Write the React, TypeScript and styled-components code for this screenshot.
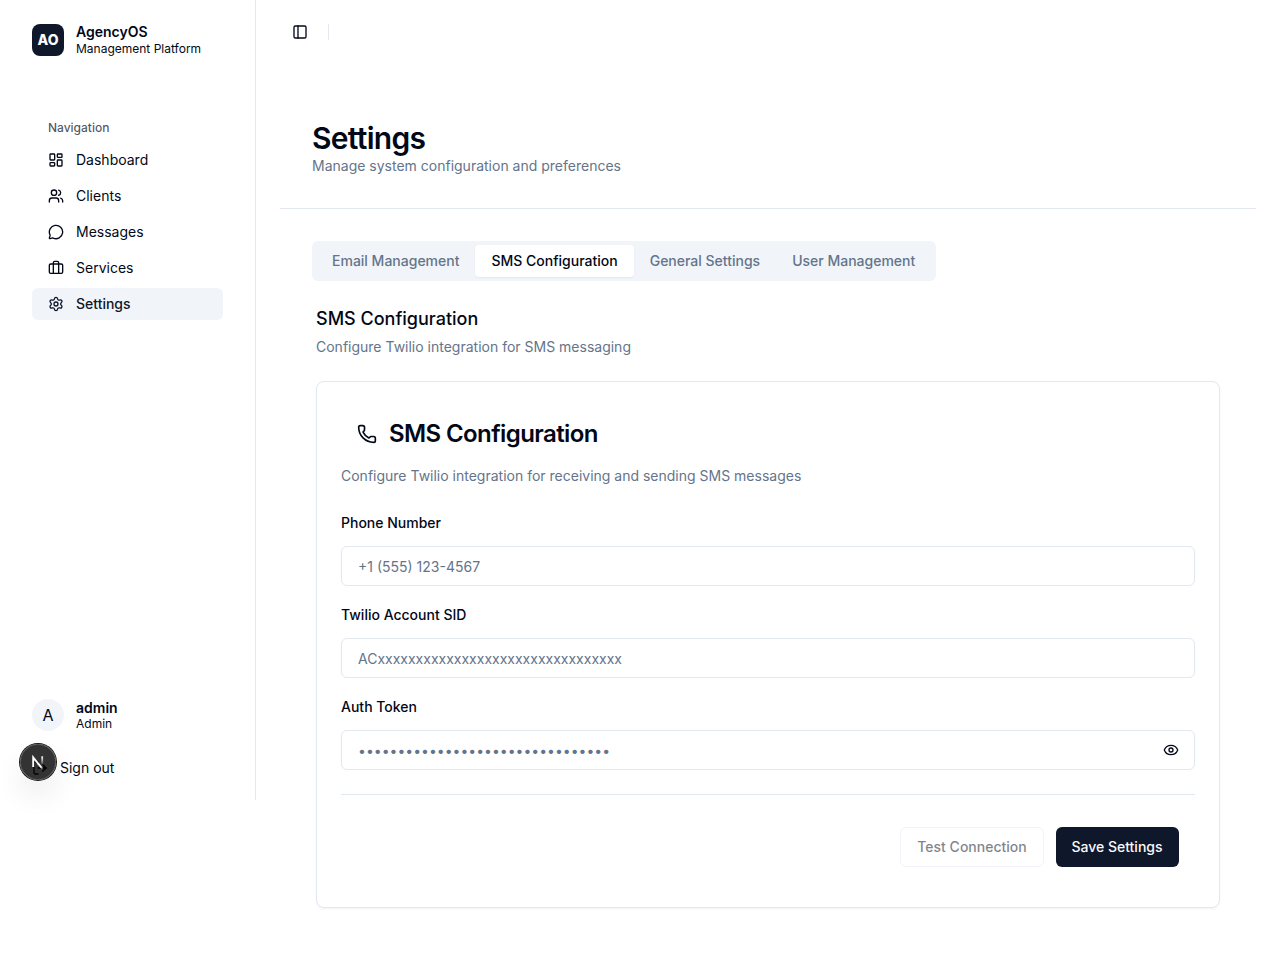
import React from "react";
import styled, { createGlobalStyle } from "styled-components";
import {
  Eye,
  LayoutDashboard,
  LogOut,
  MessageCircle,
  PanelLeft,
  Phone,
  Settings,
  Users,
} from "lucide-react";

const ink = "#020817";
const muted = "#64748b";
const line = "#e2e8f0";
const soft = "#f1f5f9";
const navy = "#0f172a";

const GlobalStyle = createGlobalStyle`
  *, *::before, *::after { box-sizing: border-box; }
  body {
    margin: 0;
    background: #fff;
    color: ${ink};
    font-family: Inter, "Liberation Sans", sans-serif;
    font-size: 14px;
    line-height: 20px;
  }
  h1, h2, h3, p, ul { margin: 0; padding: 0; }
  button, input { font: inherit; color: inherit; }
`;

const Page = styled.div`
  display: flex;
  align-items: flex-start;
  min-height: 964px;
`;

const Sidebar = styled.aside`
  display: flex;
  flex-direction: column;
  flex: none;
  width: 256px;
  height: 800px;
  padding: 24px 32px 16px;
  border-right: 1px solid ${line};
`;

const Identity = styled.div`
  display: flex;
  align-items: center;
  gap: 12px;
  height: 32px;
`;

const LogoTile = styled.div`
  display: grid;
  place-items: center;
  width: 32px;
  height: 32px;
  border-radius: 8px;
  background: ${navy};
  color: #f8fafc;
  font-weight: 800;
`;

const Avatar = styled.div`
  display: grid;
  place-items: center;
  width: 32px;
  height: 32px;
  border-radius: 50%;
  background: ${soft};
  font-size: 16px;
  font-weight: 400;
`;

const IdentityText = styled.div<{ $lowered?: boolean }>`
  display: flex;
  flex-direction: column;
  padding-top: ${(p) => (p.$lowered ? "2px" : "0")};
`;

const IdentityName = styled.span<{ $tight?: boolean }>`
  font-weight: 600;
  line-height: ${(p) => (p.$tight ? "16px" : "17.5px")};
`;

const IdentityNote = styled.span`
  font-size: 12px;
  line-height: 16px;
`;

const NavLabel = styled.div`
  margin-top: 56px;
  height: 32px;
  padding: 0 16px;
  font-size: 12px;
  font-weight: 500;
  line-height: 32px;
  color: rgba(2, 8, 23, 0.7);
`;

const NavList = styled.ul`
  display: flex;
  flex-direction: column;
  gap: 4px;
  list-style: none;
`;

const NavItem = styled.li<{ $active?: boolean }>`
  display: flex;
  align-items: center;
  gap: 12px;
  height: 32px;
  padding: 0 16px;
  border-radius: 6px;
  background: ${(p) => (p.$active ? soft : "transparent")};
  color: ${(p) => (p.$active ? navy : ink)};
  font-weight: ${(p) => (p.$active ? 500 : 400)};
`;

const SidebarFooter = styled.div`
  display: flex;
  flex-direction: column;
  gap: 21px;
  margin-top: auto;
`;

const SignOut = styled.div`
  display: flex;
  align-items: center;
  gap: 12px;
  height: 32px;
`;

const DevBadge = styled.div`
  position: fixed;
  left: 20px;
  top: 744px;
  display: grid;
  place-items: center;
  width: 36px;
  height: 36px;
  border-radius: 50%;
  background: rgba(0, 0, 0, 0.8);
  box-shadow:
    0 0 0 1px #171717,
    inset 0 0 0 1px hsla(0, 0%, 100%, 0.14),
    0 16px 32px -8px rgba(0, 0, 0, 0.24);
`;

const Main = styled.main`
  display: flex;
  flex: 1;
  flex-direction: column;
  min-width: 0;
`;

const TopBar = styled.header`
  display: flex;
  align-items: center;
  gap: 20px;
  height: 64px;
  padding: 0 36px;
`;

const TopDivider = styled.span`
  width: 1px;
  height: 16px;
  background: ${line};
`;

const Content = styled.div`
  display: flex;
  flex-direction: column;
  padding: 0 24px;
`;

const PageHeader = styled.div`
  padding: 56px 32px 32px;
  border-bottom: 1px solid ${line};
`;

const PageTitle = styled.h1`
  font-size: 30px;
  font-weight: 600;
  line-height: 36px;
  letter-spacing: -0.7px;
`;

const Description = styled.p`
  color: ${muted};
`;

const Body = styled.div`
  display: flex;
  flex-direction: column;
  align-items: flex-start;
  padding: 32px 32px 0;
`;

const TabList = styled.div`
  display: flex;
  width: 624px;
  height: 40px;
  padding: 4px;
  border-radius: 6px;
  background: ${soft};
`;

const Tab = styled.button<{ $active?: boolean }>`
  flex: none;
  padding: 6px 16px;
  border: 0;
  border-radius: 4px;
  background: ${(p) => (p.$active ? "#fff" : "transparent")};
  box-shadow: ${(p) => (p.$active ? "0 1px 2px rgba(0, 0, 0, 0.05)" : "none")};
  color: ${(p) => (p.$active ? ink : muted)};
  font-weight: 500;
  white-space: nowrap;
`;

const Section = styled.section`
  display: flex;
  flex-direction: column;
  align-self: stretch;
  padding: 24px 4px 0;
`;

const SectionTitle = styled.h2`
  margin-bottom: 4px;
  font-size: 18px;
  font-weight: 500;
  line-height: 28px;
`;

const Card = styled.div`
  margin-top: 24px;
  height: 527px;
  padding: 24px;
  border: 1px solid ${line};
  border-radius: 8px;
  box-shadow: 0 1px 2px rgba(0, 0, 0, 0.05);
`;

const CardTitle = styled.h3`
  display: flex;
  align-items: center;
  gap: 12px;
  height: 56px;
  padding: 0 16px;
  font-size: 24px;
  font-weight: 600;
  letter-spacing: -0.6px;
`;

const CardDescription = styled(Description)`
  margin: 4px 0 24px;
`;

const Field = styled.label`
  display: flex;
  flex-direction: column;
  gap: 10px;
  margin-bottom: 16px;
`;

const FieldLabel = styled.span`
  height: 26px;
  font-weight: 500;
  line-height: 26px;
`;

const InputShell = styled.span`
  display: flex;
  align-items: center;
  height: 40px;
  padding: 0 15px 0 16px;
  border: 1px solid ${line};
  border-radius: 6px;
`;

const Input = styled.input`
  flex: 1;
  min-width: 0;
  height: 22px;
  padding: 0;
  border: 0;
  outline: 0;
  background: transparent;
  &::placeholder { color: ${muted}; opacity: 1; }
`;

const Actions = styled.div`
  display: flex;
  justify-content: flex-end;
  gap: 12px;
  margin-top: 24px;
  padding: 32px 16px 0;
  border-top: 1px solid ${line};
`;

const Button = styled.button<{ $primary?: boolean }>`
  min-width: ${(p) => (p.$primary ? "123px" : "144px")};
  height: 40px;
  padding: 0 ${(p) => (p.$primary ? "16px 0 15px" : "16px")};
  border: ${(p) => (p.$primary ? "0" : `1px solid ${line}`)};
  border-radius: 6px;
  background: ${(p) => (p.$primary ? navy : "#fff")};
  color: ${(p) => (p.$primary ? "#f8fafc" : ink)};
  font-weight: 500;
  opacity: ${(p) => (p.$primary ? 1 : 0.5)};
`;

// Suitcase: a rounded body crossed by two verticals that join into the handle.
const ServicesIcon = ({ size }: { size: number }) => (
  <svg
    width={size}
    height={size}
    viewBox="0 0 24 24"
    fill="none"
    stroke="currentColor"
    strokeWidth="2"
    strokeLinecap="round"
    strokeLinejoin="round"
  >
    <path d="M16 20V4a2 2 0 0 0-2-2h-4a2 2 0 0 0-2 2v16" />
    <rect width="20" height="14" x="2" y="6" rx="2" />
  </svg>
);

const navigation = [
  { label: "Dashboard", icon: LayoutDashboard },
  { label: "Clients", icon: Users },
  { label: "Messages", icon: MessageCircle },
  { label: "Services", icon: ServicesIcon },
  { label: "Settings", icon: Settings, active: true },
];

const tabs = ["Email Management", "SMS Configuration", "General Settings", "User Management"];

const NextMark = () => (
  <svg width="14" height="14" viewBox="0 0 14 14" fill="none">
    <defs>
      <linearGradient id="stem" x1="0" y1="1" x2="0" y2="10" gradientUnits="userSpaceOnUse">
        <stop stopColor="#fff" />
        <stop offset="0.6" stopColor="#fff" stopOpacity="0.5" />
        <stop offset="1" stopColor="#fff" stopOpacity="0" />
      </linearGradient>
      <linearGradient id="slash" x1="7" y1="8" x2="12.5" y2="14" gradientUnits="userSpaceOnUse">
        <stop stopColor="#fff" />
        <stop offset="0.6" stopColor="#fff" />
        <stop offset="1" stopColor="#fff" stopOpacity="0" />
      </linearGradient>
    </defs>
    <path d="M2.2 12V2.4L7.5 9" stroke="#fff" strokeWidth="1.9" />
    <path d="M7.2 8.6L11.5 13.8" stroke="url(#slash)" strokeWidth="1.9" />
    <rect x="10.3" y="1.3" width="1.8" height="9" fill="url(#stem)" />
  </svg>
);

export default function App() {
  return (
    <>
      <GlobalStyle />
      <Page>
        <Sidebar>
          <Identity>
            <LogoTile>AO</LogoTile>
            <IdentityText>
              <IdentityName>AgencyOS</IdentityName>
              <IdentityNote>Management Platform</IdentityNote>
            </IdentityText>
          </Identity>
          <NavLabel>Navigation</NavLabel>
          <NavList>
            {navigation.map(({ label, icon: Icon, active }) => (
              <NavItem key={label} $active={active}>
                <Icon size={16} />
                {label}
              </NavItem>
            ))}
          </NavList>
          <SidebarFooter>
            <Identity>
              <Avatar>A</Avatar>
              <IdentityText $lowered>
                <IdentityName $tight>admin</IdentityName>
                <IdentityNote>Admin</IdentityNote>
              </IdentityText>
            </Identity>
            <SignOut>
              <LogOut size={16} />
              Sign out
            </SignOut>
          </SidebarFooter>
        </Sidebar>
        <Main>
          <TopBar>
            <PanelLeft size={16} />
            <TopDivider />
          </TopBar>
          <Content>
            <PageHeader>
              <PageTitle>Settings</PageTitle>
              <Description>Manage system configuration and preferences</Description>
            </PageHeader>
            <Body>
              <TabList>
                {tabs.map((tab) => (
                  <Tab key={tab} $active={tab === "SMS Configuration"}>
                    {tab}
                  </Tab>
                ))}
              </TabList>
              <Section>
                <SectionTitle>SMS Configuration</SectionTitle>
                <Description>Configure Twilio integration for SMS messaging</Description>
                <Card>
                  <CardTitle>
                    <Phone size={20} />
                    SMS Configuration
                  </CardTitle>
                  <CardDescription>
                    Configure Twilio integration for receiving and sending SMS messages
                  </CardDescription>
                  <Field>
                    <FieldLabel>Phone Number</FieldLabel>
                    <InputShell>
                      <Input placeholder="+1 (555) 123-4567" />
                    </InputShell>
                  </Field>
                  <Field>
                    <FieldLabel>Twilio Account SID</FieldLabel>
                    <InputShell>
                      <Input placeholder={"AC" + "x".repeat(32)} />
                    </InputShell>
                  </Field>
                  <Field>
                    <FieldLabel>Auth Token</FieldLabel>
                    <InputShell>
                      <Input placeholder={"•".repeat(32)} />
                      <Eye size={16} />
                    </InputShell>
                  </Field>
                  <Actions>
                    <Button disabled>Test Connection</Button>
                    <Button $primary>Save Settings</Button>
                  </Actions>
                </Card>
              </Section>
            </Body>
          </Content>
        </Main>
      </Page>
      <DevBadge>
        <NextMark />
      </DevBadge>
    </>
  );
}
